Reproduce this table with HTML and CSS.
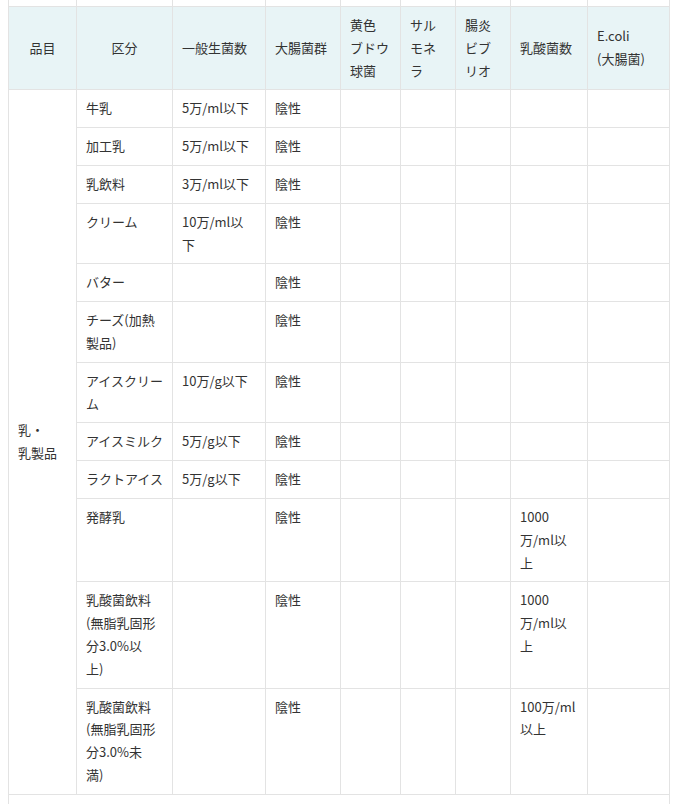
FILE: index.html
```html
<!DOCTYPE html>
<html lang="ja">
<head>
<meta charset="utf-8">
<title>微生物規格</title>
<link rel="stylesheet" href="styles.css">
</head>
<body>
<table class="spec">
  <colgroup>
    <col class="c1"><col class="c2"><col class="c3"><col class="c4"><col class="c5"><col class="c6"><col class="c7"><col class="c8"><col class="c9">
  </colgroup>
  <tbody>
    <tr class="prev"><td></td><td></td><td></td><td></td><td></td><td></td><td></td><td></td><td></td></tr>
    <tr class="head">
      <th class="center">品目</th>
      <th class="center">区分</th>
      <th>一般生菌数</th>
      <th>大腸菌群</th>
      <th>黄色<br>ブドウ<br>球菌</th>
      <th>サル<br>モネ<br>ラ</th>
      <th>腸炎<br>ビブ<br>リオ</th>
      <th>乳酸菌数</th>
      <th>E.coli<br>(大腸菌)</th>
    </tr>
    <tr>
      <td class="group" rowspan="12">乳・<br>乳製品</td>
      <td>牛乳</td><td>5万/ml以下</td><td>陰性</td><td></td><td></td><td></td><td></td><td></td>
    </tr>
    <tr><td>加工乳</td><td>5万/ml以下</td><td>陰性</td><td></td><td></td><td></td><td></td><td></td></tr>
    <tr><td>乳飲料</td><td>3万/ml以下</td><td>陰性</td><td></td><td></td><td></td><td></td><td></td></tr>
    <tr><td>クリーム</td><td>10万/ml以<br>下</td><td>陰性</td><td></td><td></td><td></td><td></td><td></td></tr>
    <tr><td>バター</td><td></td><td>陰性</td><td></td><td></td><td></td><td></td><td></td></tr>
    <tr><td>チーズ(加熱<br>製品)</td><td></td><td>陰性</td><td></td><td></td><td></td><td></td><td></td></tr>
    <tr><td>アイスクリー<br>ム</td><td>10万/g以下</td><td>陰性</td><td></td><td></td><td></td><td></td><td></td></tr>
    <tr><td>アイスミルク</td><td>5万/g以下</td><td>陰性</td><td></td><td></td><td></td><td></td><td></td></tr>
    <tr><td>ラクトアイス</td><td>5万/g以下</td><td>陰性</td><td></td><td></td><td></td><td></td><td></td></tr>
    <tr><td>発酵乳</td><td></td><td>陰性</td><td></td><td></td><td></td><td>1000<br>万/ml以<br>上</td><td></td></tr>
    <tr><td>乳酸菌飲料<br>(無脂乳固形<br>分3.0%以<br>上)</td><td></td><td>陰性</td><td></td><td></td><td></td><td>1000<br>万/ml以<br>上</td><td></td></tr>
    <tr><td>乳酸菌飲料<br>(無脂乳固形<br>分3.0%未<br>満)</td><td></td><td>陰性</td><td></td><td></td><td></td><td>100万/ml<br>以上</td><td></td></tr>
    <tr class="next"><td colspan="9">&nbsp;</td></tr>
  </tbody>
</table>
</body>
</html>
```

FILE: styles.css
```css
html, body {
  background: #ffffff;
}
body {
  margin: 0 8px;
  font-family: "Noto Sans CJK JP", "Noto Sans", sans-serif;
  font-size: 13px;
  line-height: 22.8px;
  color: #333333;
}
.spec {
  width: 661px;
  table-layout: fixed;
  border-collapse: collapse;
}
.c1 { width: 68px; }
.c2 { width: 96px; }
.c3 { width: 93px; }
.c4 { width: 75px; }
.c5 { width: 60px; }
.c6 { width: 55px; }
.c7 { width: 55px; }
.c8 { width: 77px; }
.c9 { width: 82px; }
.spec th,
.spec td {
  border: 1px solid #e3e3e3;
  padding: 7px 9px;
  text-align: left;
  vertical-align: top;
  white-space: nowrap;
  font-weight: normal;
}
.spec .prev td {
  border-top: none;
  height: 6px;
  padding: 0;
}
.spec .head th {
  background: #e8f4f6;
  vertical-align: middle;
}
.spec .head th.center {
  text-align: center;
}
.spec td.group {
  vertical-align: middle;
}
.spec .next td {
  height: 60px;
}
```
